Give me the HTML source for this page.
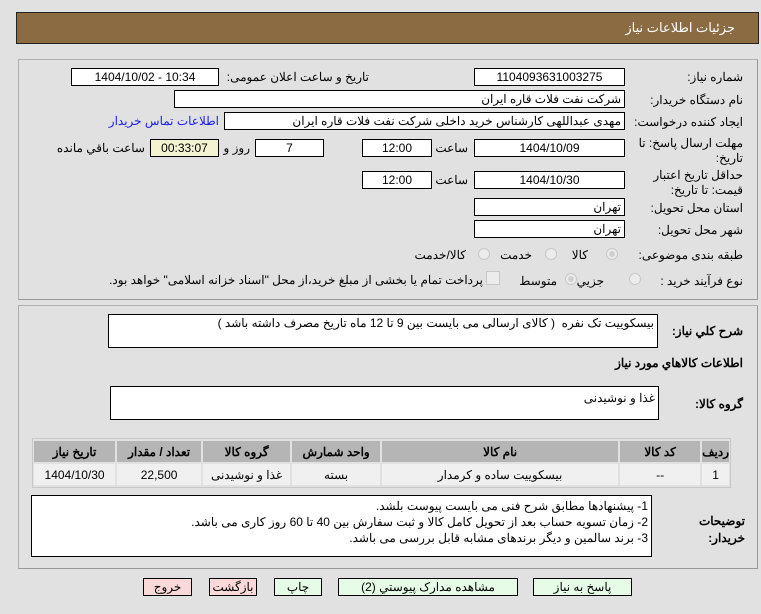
<!DOCTYPE html>
<html><head><meta charset="utf-8"><style>
body{margin:0;width:761px;height:614px;background:#e1e1e1;font-family:Tahoma,"Liberation Sans","Noto Sans CJK SC",sans-serif;font-size:12px;color:#000;position:relative;overflow:hidden}
.a{position:absolute;white-space:nowrap}
.in{position:absolute;background:#fff;border:1px solid #000;box-sizing:border-box;height:18px;line-height:16px;text-align:center;font-size:12px}
.r{direction:rtl;text-align:right;padding-right:3px}
.lb{position:absolute;direction:rtl;text-align:right;white-space:nowrap}
.panel{position:absolute;border:1px solid #b0b0b0;border-right-color:#999;border-bottom-color:#999}
.rad{position:absolute;width:12px;height:12px;border-radius:50%;border:1px solid #c8c8c8;background:#ececec;box-sizing:border-box}
.rad.on::after{content:"";position:absolute;left:2px;top:2px;width:6px;height:6px;border-radius:50%;background:#d0d0d0}
table{border-collapse:separate;border-spacing:2px}
td{font-size:12px;text-align:center;height:21px;padding:0}
.btn{position:absolute;height:18px;border:1px solid #000;box-sizing:border-box;text-align:center;line-height:16px;background:#e6fce6;direction:rtl}
.pk{background:#fcd9d9}
</style></head><body>
<div class="a" style="left:16px;top:12px;width:743px;height:32px;background:#8b6c42;border:1px solid #222;box-sizing:border-box"></div>
<div class="lb" style="right:26px;top:20px;color:#fff;font-size:13px">جزئیات اطلاعات نیاز</div>

<div class="panel" style="left:18px;top:59px;width:738px;height:239px"></div>
<div class="panel" style="left:18px;top:305px;width:738px;height:262px"></div>

<div class="lb" style="right:18px;top:70px">شماره نیاز:</div>
<div class="in" style="left:474px;top:68px;width:151px">1104093631003275</div>
<div class="lb" style="right:392px;top:70px">تاریخ و ساعت اعلان عمومی:</div>
<div class="in" style="left:71px;top:68px;width:148px">1404/10/02 - 10:34</div>

<div class="lb" style="right:18px;top:93px">نام دستگاه خریدار:</div>
<div class="in r" style="left:174px;top:90px;width:451px">شرکت نفت فلات قاره ایران</div>

<div class="lb" style="right:18px;top:115px">ایجاد کننده درخواست:</div>
<div class="in r" style="left:224px;top:112px;width:401px">مهدی عبداللهی کارشناس خرید داخلی شرکت نفت فلات قاره ایران</div>
<div class="lb" style="right:542px;top:114px;color:#1a1aff">اطلاعات تماس خریدار</div>

<div class="lb" style="right:18px;top:136px;line-height:15px">مهلت ارسال پاسخ: تا<br>تاریخ:</div>
<div class="in" style="left:474px;top:139px;width:151px">1404/10/09</div>
<div class="lb" style="right:293px;top:141px">ساعت</div>
<div class="in" style="left:362px;top:139px;width:70px">12:00</div>
<div class="in" style="left:255px;top:139px;width:69px">7</div>
<div class="lb" style="right:511px;top:141px">روز و</div>
<div class="in" style="left:150px;top:139px;width:69px;background:#f3f3d2">00:33:07</div>
<div class="lb" style="right:616px;top:141px">ساعت باقي مانده</div>

<div class="lb" style="right:18px;top:168px;line-height:15px">حداقل تاریخ اعتبار<br>قیمت: تا تاریخ:</div>
<div class="in" style="left:474px;top:171px;width:151px">1404/10/30</div>
<div class="lb" style="right:293px;top:173px">ساعت</div>
<div class="in" style="left:362px;top:171px;width:70px">12:00</div>

<div class="lb" style="right:18px;top:201px">استان محل تحویل:</div>
<div class="in r" style="left:474px;top:198px;width:151px">تهران</div>
<div class="lb" style="right:18px;top:223px">شهر محل تحویل:</div>
<div class="in r" style="left:474px;top:220px;width:151px">تهران</div>

<div class="lb" style="right:18px;top:248px">طبقه بندی موضوعی:</div>
<div class="rad on" style="left:606px;top:248px"></div><div class="lb" style="right:173px;top:248px">کالا</div>
<div class="rad" style="left:545px;top:248px"></div><div class="lb" style="right:229px;top:248px">خدمت</div>
<div class="rad" style="left:478px;top:248px"></div><div class="lb" style="right:295px;top:248px">کالا/خدمت</div>

<div class="lb" style="right:18px;top:274px">نوع فرآیند خرید :</div>
<div class="rad" style="left:629px;top:273px"></div><div class="lb" style="right:157px;top:274px">جزیي</div>
<div class="rad on" style="left:565px;top:273px"></div><div class="lb" style="right:204px;top:274px">متوسط</div>
<div class="a" style="left:486px;top:271px;width:12px;height:12px;border:1px solid #c8c8c8;background:#ececec"></div>
<div class="lb" style="right:278px;top:273px">پرداخت تمام یا بخشی از مبلغ خرید،از محل "اسناد خزانه اسلامی" خواهد بود.</div>

<div class="lb" style="right:18px;top:324px;font-weight:bold">شرح کلي نیاز:</div>
<div class="in r" style="left:108px;top:314px;width:550px;height:34px;text-align:right">بیسکوییت تک نفره&nbsp; ( کالای ارسالی می بایست بین 9 تا 12 ماه تاریخ مصرف داشته باشد )</div>
<div class="lb" style="right:18px;top:356px;font-weight:bold">اطلاعات کالاهاي مورد نیاز</div>
<div class="lb" style="right:18px;top:397px;font-weight:bold">گروه کالا:</div>
<div class="in r" style="left:110px;top:386px;width:549px;height:34px;text-align:right;line-height:22px">غذا و نوشیدنی</div>

<div class="a" style="left:32px;top:438px;width:699px;height:50px;border:1px solid #c8c8c8;box-sizing:border-box"></div>
<table class="a" style="left:32px;top:439px;width:699px;direction:rtl">
<tr style="background:#b5b5b5;font-weight:bold"><td style="width:15px">ردیف</td><td style="width:80px">کد کالا</td><td style="width:236px">نام کالا</td><td style="width:88px">واحد شمارش</td><td style="width:87px">گروه کالا</td><td style="width:84px">تعداد / مقدار</td><td>تاریخ نیاز</td></tr>
<tr style="background:#f0f0f0"><td>1</td><td>--</td><td>بیسکوییت ساده و کرمدار</td><td>بسته</td><td>غذا و نوشیدنی</td><td>22,500</td><td>1404/10/30</td></tr>
</table>

<div class="lb" style="right:16px;top:513px;font-weight:bold;line-height:17px">توضیحات<br>خریدار:</div>
<div class="in r" style="left:31px;top:495px;width:621px;height:62px;text-align:right;line-height:16px;padding-top:2px;white-space:normal">1- پیشنهادها مطابق شرح فنی می بایست پیوست بلشد.<br>2- زمان تسویه حساب بعد از تحویل کامل کالا و ثبت سفارش بین 40 تا 60 روز کاری می باشد.<br>3- برند سالمین و دیگر برندهای مشابه قابل بررسی می باشد.</div>

<div class="btn" style="left:533px;top:578px;width:99px">پاسخ به نیاز</div>
<div class="btn" style="left:338px;top:578px;width:180px">مشاهده مدارک پیوستي (2)</div>
<div class="btn" style="left:274px;top:578px;width:48px">چاپ</div>
<div class="btn pk" style="left:209px;top:578px;width:48px">بازگشت</div>
<div class="btn pk" style="left:143px;top:578px;width:49px">خروج</div>
</body></html>
